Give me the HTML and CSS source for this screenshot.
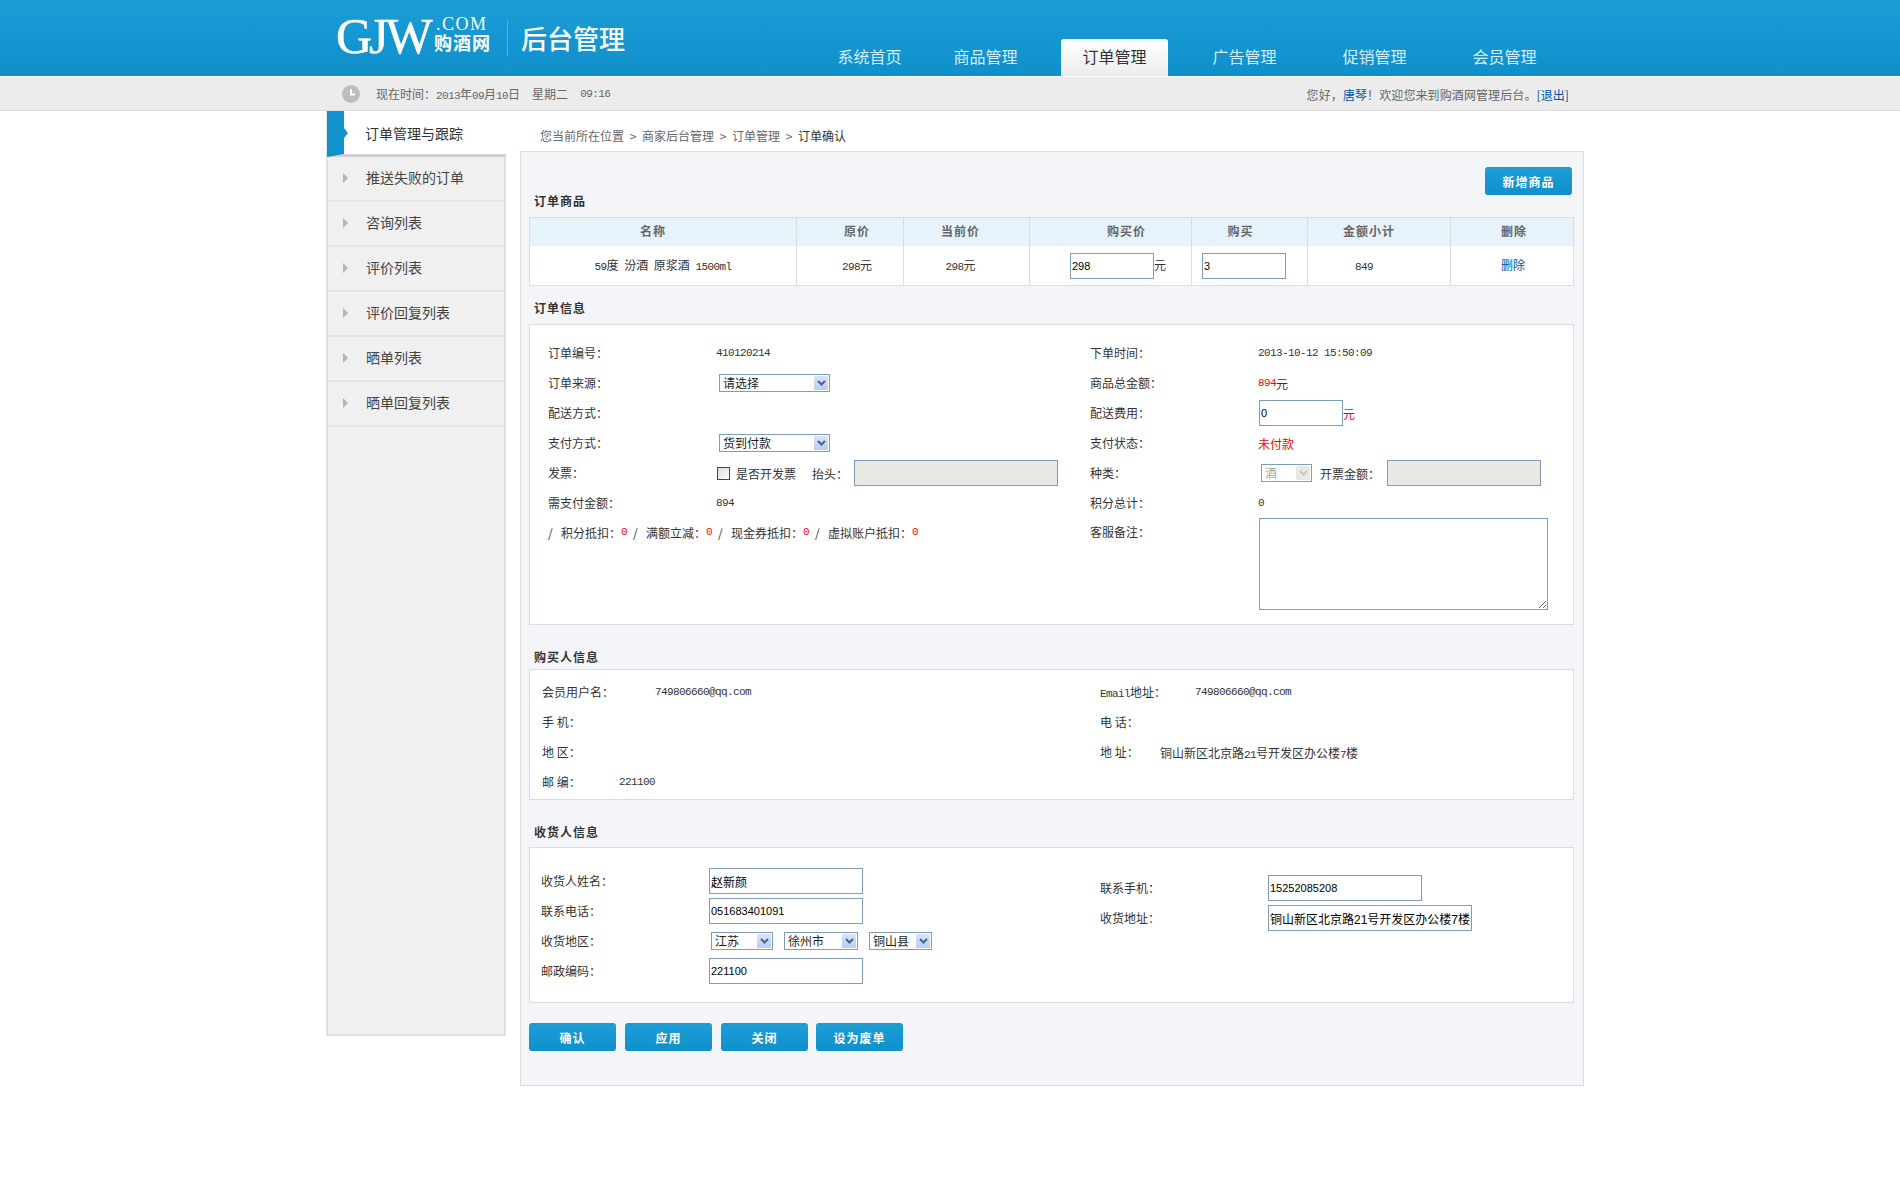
FILE: index.html
```html
<!DOCTYPE html>
<html lang="zh-CN">
<head>
  <meta charset="UTF-8" />
  <title>订单确认</title>
  <link rel="stylesheet" href="styles.css">
</head>
<body>
  <div class="header">
    <div class="logo">
      <span class="logo-gjw">GJW</span>
      <span class="logo-side"><span class="logo-com">.COM</span><span class="logo-cn">购酒网</span></span>
      <span class="logo-title">后台管理</span>
    </div>
    <div class="nav">
      <a class="first">系统首页</a>
      <a>商品管理</a>
      <a class="active">订单管理</a>
      <a>广告管理</a>
      <a>促销管理</a>
      <a>会员管理</a>
    </div>
  </div>

  <div class="subbar">
    <div class="subbar-time">
      <svg class="clock" width="18" height="18" viewBox="0 0 18 18"><circle cx="9" cy="9" r="9" fill="#bdbdbd"/><path d="M9 4v5.500h4" fill="none" stroke="#fff" stroke-width="2"/></svg>
      <span>现在时间：<span class="num">2013</span>年<span class="num">09</span>月<span class="num">10</span>日</span>
      <span class="week">星期二</span>
      <span class="num clock-time">09:16</span>
    </div>
    <div class="subbar-user">您好，<a>唐琴</a>！欢迎您来到购酒网管理后台。<a>[退出]</a></div>
  </div>

  <div class="wrap">
    <div class="sidebar">
      <div class="side-active">订单管理与跟踪</div>
      <a class="side-item">推送失败的订单</a>
      <a class="side-item">咨询列表</a>
      <a class="side-item">评价列表</a>
      <a class="side-item">评价回复列表</a>
      <a class="side-item">晒单列表</a>
      <a class="side-item">晒单回复列表</a>
    </div>

    <div class="content">
      <div class="crumbs">
        <span>您当前所在位置</span><i>&gt;</i><span>商家后台管理</span><i>&gt;</i><span>订单管理</span><i>&gt;</i><span class="crumb-now">订单确认</span>
      </div>

      <div class="panel">
        <div class="toolbar"><button class="btn" type="button">新增商品</button></div>

        <h3 class="sec-title t-goods">订单商品</h3>
        <table class="goods">
          <colgroup>
            <col class="w1"><col class="w2"><col class="w3"><col class="w4"><col class="w5"><col class="w6"><col class="w7">
          </colgroup>
          <thead>
            <tr>
              <th class="h1">名称</th>
              <th class="h2">原价</th>
              <th class="h3">当前价</th>
              <th class="h4">购买价</th>
              <th class="h5">购买</th>
              <th class="h6">金额小计</th>
              <th class="h7">删除</th>
            </tr>
          </thead>
          <tbody>
            <tr>
              <td class="d1"><span class="num">59</span>度 汾酒 原浆酒 <span class="num">1500ml</span></td>
              <td class="d2"><span class="num">298</span>元</td>
              <td class="d3"><span class="num">298</span>元</td>
              <td class="d4"><input class="ipt ipt-s" type="text" value="298">元</td>
              <td class="d5"><input class="ipt ipt-s" type="text" value="3"></td>
              <td class="d6"><span class="num">849</span></td>
              <td class="d7"><a>删除</a></td>
            </tr>
          </tbody>
        </table>

        <h3 class="sec-title t-order">订单信息</h3>
        <div class="box box-order">
          <div class="col col-l">
            <div class="row"><span class="lbl">订单编号：</span><span class="num">410120214</span></div>
            <div class="row"><span class="lbl">订单来源：</span>
              <span class="sel sel-from"><span>请选择</span><i class="sel-btn"><svg width="9" height="6" viewBox="0 0 9 6"><path d="M1 1l3.500 3.500L8 1" fill="none" stroke="#4d6185" stroke-width="2"/></svg></i></span>
            </div>
            <div class="row"><span class="lbl">配送方式：</span></div>
            <div class="row"><span class="lbl">支付方式：</span>
              <span class="sel sel-from"><span>货到付款</span><i class="sel-btn"><svg width="9" height="6" viewBox="0 0 9 6"><path d="M1 1l3.500 3.500L8 1" fill="none" stroke="#4d6185" stroke-width="2"/></svg></i></span>
            </div>
            <div class="row"><span class="lbl lbl-chk">发票：</span>
              <input class="chk" type="checkbox"><span class="chk-text">是否开发票</span><span class="rise">抬头：</span><input class="ipt ipt-off ipt-rise" type="text" disabled>
            </div>
            <div class="row"><span class="lbl">需支付金额：</span><span class="num">894</span></div>
            <div class="row row-sum">
              <span class="sl">/</span><span>积分抵扣：</span><span class="red num">0</span>
              <span class="sl">/</span><span>满额立减：</span><span class="red num">0</span>
              <span class="sl">/</span><span>现金券抵扣：</span><span class="red num">0</span>
              <span class="sl">/</span><span>虚拟账户抵扣：</span><span class="red num">0</span>
            </div>
          </div>
          <div class="col">
            <div class="row"><span class="lbl">下单时间：</span><span class="num">2013-10-12 15:50:09</span></div>
            <div class="row"><span class="lbl">商品总金额：</span><span class="red num">894</span>元</div>
            <div class="row"><span class="lbl">配送费用：</span><input class="ipt ipt-s ipt-fee" type="text" value="0"><span class="red">元</span></div>
            <div class="row"><span class="lbl">支付状态：</span><span class="red">未付款</span></div>
            <div class="row"><span class="lbl lbl-kind">种类：</span>
              <span class="sel sel-kind sel-off"><span>酒</span><i class="sel-btn"><svg width="9" height="6" viewBox="0 0 9 6"><path d="M1 1l3.500 3.500L8 1" fill="none" stroke="#c6c6c0" stroke-width="2"/></svg></i></span>
              <span class="amount">开票金额：</span><input class="ipt ipt-off ipt-amount" type="text" disabled>
            </div>
            <div class="row"><span class="lbl">积分总计：</span><span class="num">0</span></div>
            <div class="row row-top"><span class="lbl">客服备注：</span><textarea class="memo"></textarea></div>
          </div>
        </div>

        <h3 class="sec-title t-buyer">购买人信息</h3>
        <div class="box box-buyer">
          <div class="col col-buyer">
            <div class="row"><span class="lbl lbl-b1">会员用户名：</span><span class="num">749806660@qq.com</span></div>
            <div class="row"><span class="lbl">手 机：</span></div>
            <div class="row"><span class="lbl">地 区：</span></div>
            <div class="row"><span class="lbl lbl-b2">邮 编：</span><span class="num">221100</span></div>
          </div>
          <div class="col">
            <div class="row"><span class="lbl lbl-b3"><span class="num">Email</span>地址：</span><span class="num">749806660@qq.com</span></div>
            <div class="row"><span class="lbl">电 话：</span></div>
            <div class="row"><span class="lbl lbl-b4">地 址：</span><span>铜山新区北京路<span class="num">21</span>号开发区办公楼<span class="num">7</span>楼</span></div>
          </div>
        </div>

        <h3 class="sec-title t-recv">收货人信息</h3>
        <div class="box box-recv">
          <div class="col col-recv">
            <div class="row"><span class="lbl">收货人姓名：</span><input class="ipt ipt-m" type="text" value="赵新颜"></div>
            <div class="row"><span class="lbl">联系电话：</span><input class="ipt ipt-m ipt-digits" type="text" value="051683401091"></div>
            <div class="row"><span class="lbl lbl-area">收货地区：</span>
              <span class="sel sel-a"><span>江苏</span><i class="sel-btn"><svg width="9" height="6" viewBox="0 0 9 6"><path d="M1 1l3.500 3.500L8 1" fill="none" stroke="#4d6185" stroke-width="2"/></svg></i></span>
              <span class="sel sel-b"><span>徐州市</span><i class="sel-btn"><svg width="9" height="6" viewBox="0 0 9 6"><path d="M1 1l3.500 3.500L8 1" fill="none" stroke="#4d6185" stroke-width="2"/></svg></i></span>
              <span class="sel sel-c"><span>铜山县</span><i class="sel-btn"><svg width="9" height="6" viewBox="0 0 9 6"><path d="M1 1l3.500 3.500L8 1" fill="none" stroke="#4d6185" stroke-width="2"/></svg></i></span>
            </div>
            <div class="row"><span class="lbl">邮政编码：</span><input class="ipt ipt-m ipt-digits" type="text" value="221100"></div>
          </div>
          <div class="col col-recv-r">
            <div class="row"><span class="lbl">联系手机：</span><input class="ipt ipt-m ipt-digits" type="text" value="15252085208"></div>
            <div class="row"><span class="lbl">收货地址：</span><input class="ipt ipt-addr" type="text" value="铜山新区北京路21号开发区办公楼7楼"></div>
          </div>
        </div>

        <div class="actions">
          <button class="btn" type="button">确认</button>
          <button class="btn" type="button">应用</button>
          <button class="btn" type="button">关闭</button>
          <button class="btn" type="button">设为废单</button>
        </div>
      </div>
    </div>
  </div>
</body>
</html>
```

FILE: styles.css
```css
body { margin: 0; background: #fff; color: #333; font-family: "Noto Sans CJK SC", "Liberation Sans", sans-serif; font-size: 12px; }
a { color: #0056a8; }
.num { font-family: "Liberation Mono", monospace; font-size: 11px; letter-spacing: -0.600px; }
.red { color: #f00; }

/* header */
.header { height: 76px; display: flex; justify-content: flex-start; background: linear-gradient(#1c9dd6, #0f90cb); }
.logo { width: 480px; margin-left: 336px; display: flex; align-items: flex-start; color: #fff; }
.logo-gjw { font-family: "Liberation Serif", serif; font-size: 50px; line-height: 72px; letter-spacing: -3px; width: 98px; -webkit-text-stroke: 0.500px #fff; }
.logo-side { display: flex; flex-direction: column; width: 73px; }
.logo-com { font-family: "Liberation Serif", serif; font-size: 18px; line-height: 18px; margin: 15px 0 0 2px; letter-spacing: 1.500px; }
.logo-cn { font-size: 18px; font-weight: 700; line-height: 19px; letter-spacing: 1px; }
.logo-title { margin-top: 19px; padding-left: 13px; height: 37px; border-left: 1px solid #4fb3e0; font-size: 26px; font-weight: 500; line-height: 38px; }
.nav { display: flex; align-self: flex-end; }
.nav a { width: 107px; height: 37px; margin-right: 22px; border-radius: 3px 3px 0 0; color: #d6eef9; font-size: 16px; line-height: 35px; text-align: center; }
.nav a.first { margin-right: 9px; }
.nav a.active, .nav a.active ~ a { margin-right: 23px; }
.nav a.active { background: linear-gradient(#fff, #ececec); color: #333; }

.subbar { height: 33px; border-top: 1px solid #fff; border-bottom: 1px solid #ddd; background: #ececec; color: #666; display: flex; justify-content: space-between; }
.subbar-time { margin-left: 342px; display: flex; align-items: center; height: 33px; }
.clock { margin-right: 16px; }
.week { margin-left: 12px; }
.clock-time { margin-left: 12px; }
.subbar-user { margin-right: 331px; line-height: 36px; letter-spacing: 0.100px; }

/* sidebar */
.wrap { display: flex; margin-left: 326px; width: 1258px; }
.sidebar { width: 176px; height: 923px; border: solid #e0e0e0; border-width: 0 2px 2px; background: #f0f0f0; color: #444; font-size: 14px; }
.side-active { position: relative; box-sizing: border-box; height: 46px; margin-left: -1px; margin-right: -2px; padding-left: 21px; border-left: 17px solid #1092cf; border-bottom: 3px solid #d0d0d0; background: #fff; color: #333; line-height: 44px; }
.side-active::after { content: ""; position: absolute; left: 0; top: 17px; border: 5px solid transparent; border-left: 4px solid #1092cf; }
.side-item { position: relative; display: block; height: 43px; padding-left: 38px; border-bottom: 2px solid #e4e4e4; color: #444; line-height: 41px; }
.side-item::before { content: ""; position: absolute; left: 15px; top: 16px; border: 5px solid transparent; border-left: 5px solid #b5b5b5; }

/* main */
.content { margin-left: 14px; width: 1064px; }
.crumbs { height: 40px; box-sizing: border-box; padding: 17px 0 0 20px; color: #666; line-height: 16px; }
.crumbs i { display: inline-block; width: 18px; font-style: normal; text-align: center; }
.crumb-now { color: #333; }
.panel { box-sizing: border-box; height: 935px; padding: 15px 9px 0 8px; border: 1px solid #dcdde1; background: #f4f5f9; }
.toolbar { display: flex; justify-content: flex-end; padding-right: 2px; }
.btn { width: 87px; height: 28px; padding: 0; border: none; border-radius: 3px; background: linear-gradient(#1d9ed7, #0f90cb); color: #fff; font-family: inherit; font-size: 12px; font-weight: 700; letter-spacing: 1px; }
.sec-title { margin: 0; padding-left: 5px; font-size: 12px; font-weight: 700; line-height: 12px; letter-spacing: 1px; color: #333; }
.t-goods { height: 22px; }
.t-order { margin-top: 16px; height: 22px; }
.t-buyer { margin-top: 26px; height: 18px; }
.t-recv { margin-top: 26px; height: 21px; }

.goods { width: 1044px; table-layout: fixed; border-collapse: collapse; background: #fff; }
.goods th, .goods td { padding: 0; border: 1px solid #dcdde1; text-align: center; }
.goods th { height: 25px; padding-bottom: 3px; border-bottom: none; background: #e6f3fb; color: #666; font-weight: 700; letter-spacing: 1px; }
.goods td { height: 36px; padding-bottom: 3px; border-top: none; }
.w1 { width: 267px; } .w2 { width: 107px; } .w3 { width: 126px; } .w4 { width: 162px; } .w5 { width: 116px; } .w6 { width: 143px; } .w7 { width: 123px; }
.goods .h1 { padding-right: 20px; }
.goods .h2, .goods .d2 { padding-left: 14px; }
.goods .h3, .goods .d3 { padding-right: 12px; }
.goods .h4 { padding-left: 32px; }
.goods .h5 { padding-right: 18px; }
.goods .h6 { padding-right: 20px; }
.goods .h7 { padding-left: 4px; }
.goods .d1 { word-spacing: 3px; }
.goods .d6 { padding-right: 30px; }
.goods .d7 { padding-left: 2px; }
.goods .d4 { padding: 0 0 0 40px; text-align: left; }
.goods .d5 { padding: 0 0 0 10px; text-align: left; }

.box { box-sizing: border-box; width: 1045px; display: flex; border: 1px solid #dcdde1; background: #fff; }
.box-order { height: 301px; padding: 13px 0 0 18px; }
.box-buyer { height: 131px; padding: 7px 0 0 12px; }
.box-recv { height: 156px; padding: 18px 0 0 11px; }
.col-l { width: 542px; }
.col-buyer { width: 558px; }
.col-recv { width: 559px; }
.col-recv-r { padding-top: 7px; }
.row { height: 30px; display: flex; align-items: center; white-space: pre; }
.row-top { align-items: flex-start; }
.row-top .lbl { line-height: 28px; }
.lbl { width: 168px; flex: none; padding-bottom: 2px; }
.lbl-chk { width: 169px; }
.lbl-kind { width: 171px; }
.lbl-area { width: 169px; }
.lbl-b1 { width: 113px; }
.lbl-b2 { width: 77px; }
.lbl-b3 { width: 95px; }
.lbl-b4 { width: 60px; }
.row-sum { padding-bottom: 2px; box-sizing: border-box; }
.sl { width: 13px; margin-left: 6px; }
.sl:first-child { margin-left: 0; }

.ipt { box-sizing: border-box; height: 26px; padding: 0 1px; border: 1px solid #7f9db9; background: #fff; color: #000; font-family: "Liberation Sans", "Noto Sans CJK SC", sans-serif; font-size: 12px; }
.ipt-s { width: 84px; font-size: 11px; }
.ipt-fee { margin-left: 1px; }
.ipt-m { width: 154px; }
.ipt-digits { font-size: 11px; }
.ipt-addr { width: 204px; }
.ipt-off { background: #e9e8e3; }
.ipt-rise { width: 204px; }
.ipt-amount { width: 154px; }
.chk { box-sizing: border-box; width: 13px; height: 13px; margin: 0; appearance: none; border: 1px solid #1c5180; background: linear-gradient(135deg, #dcdcd7, #fff); }
.chk-text { margin-left: 6px; }
.rise { margin-left: 16px; width: 42px; }
.amount { margin-left: 8px; width: 67px; }
.memo { box-sizing: border-box; width: 289px; height: 92px; margin: 0 0 0 1px; border: 1px solid #7f9db9; background: #fff; }

.sel { box-sizing: border-box; height: 18px; display: inline-flex; align-items: center; justify-content: space-between; padding: 0 1px 0 3px; border: 1px solid #7f9db9; background: #fff; color: #222; font-size: 12px; line-height: 14px; }
.sel-btn { width: 14px; height: 14px; display: flex; align-items: center; justify-content: center; border-radius: 1px; background: linear-gradient(#d8e4fb, #b8ccf6); }
.sel-from { width: 111px; margin-left: 3px; }
.sel-kind { width: 51px; }
.sel-off { color: #a5a59c; }
.sel-off .sel-btn { background: #e9e8e3; }
.sel-a { width: 62px; margin-left: 1px; }
.sel-b { width: 74px; margin-left: 11px; }
.sel-c { width: 63px; margin-left: 11px; }

.actions { display: flex; margin-top: 20px; }
.actions .btn { margin-right: 9px; }
.actions .btn:nth-child(3) { margin-right: 8px; }
```
